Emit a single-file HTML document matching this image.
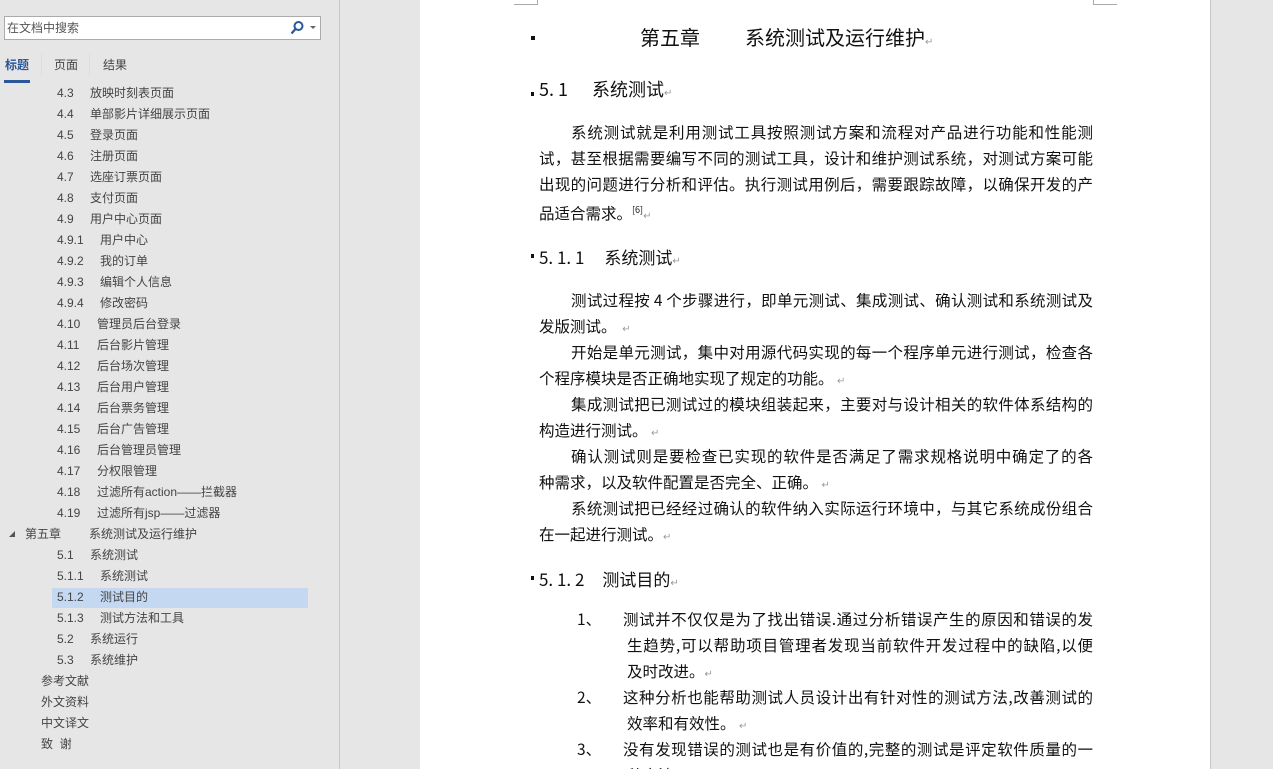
<!DOCTYPE html>
<html style="width:1273px;height:769px;overflow:hidden"><head><meta charset="utf-8"><style>
*{margin:0;padding:0;box-sizing:border-box}
body{width:1273px;height:769px;overflow:hidden;background:#e6e6e6;position:relative;font-family:"Liberation Sans","Microsoft YaHei","Noto Sans CJK SC",sans-serif;}
.a{position:absolute;white-space:nowrap}
.nav{font-size:12px;color:#444;line-height:21px;height:21px}
.nav .n{position:absolute;left:0}
.b{font-size:15.5px;line-height:26px;height:26px;font-family:"Noto Sans CJK SC",sans-serif;color:#111;overflow:hidden}
.j{text-align:justify;text-align-last:justify;white-space:normal}
.r{color:#999;font-size:10px}
.h{font-family:"Noto Sans CJK SC",sans-serif;color:#111}
</style></head><body>
<div class="a" style="left:339px;top:0;width:1px;height:769px;background:#c8c8c8"></div>
<div class="a" style="left:4px;top:16px;width:317px;height:24px;background:#fff;border:1px solid #ababab"></div>
<div class="a" style="left:7px;top:19px;font-size:12px;color:#555;line-height:18px">在文档中搜索</div>
<svg class="a" style="left:289px;top:20px" width="16" height="16" viewBox="0 0 16 16"><circle cx="9.5" cy="6" r="4" fill="none" stroke="#2b579a" stroke-width="2"/><path d="M6.5 9 L2.5 13.5" stroke="#2b579a" stroke-width="2.2"/></svg>
<div class="a" style="left:310px;top:26px;width:0;height:0;border-left:3px solid transparent;border-right:3px solid transparent;border-top:3px solid #666"></div>
<div class="a" style="left:5px;top:57px;font-size:12px;color:#2b579a;font-weight:bold;line-height:16px">标题</div>
<div class="a" style="left:4px;top:80px;width:26px;height:3px;background:#2b579a"></div>
<div class="a" style="left:41px;top:54px;width:1px;height:22px;background:#ddd"></div>
<div class="a" style="left:54px;top:57px;font-size:12px;color:#444;line-height:16px">页面</div>
<div class="a" style="left:89px;top:54px;width:1px;height:22px;background:#ddd"></div>
<div class="a" style="left:103px;top:57px;font-size:12px;color:#444;line-height:16px">结果</div>
<div class="a" style="left:52px;top:588px;width:256px;height:20px;background:#c5d8f2"></div>

<div class="a nav" style="left:57px;top:83px"><span class="n">4.3</span><span style="margin-left:33px">放映时刻表页面</span></div>
<div class="a nav" style="left:57px;top:104px"><span class="n">4.4</span><span style="margin-left:33px">单部影片详细展示页面</span></div>
<div class="a nav" style="left:57px;top:125px"><span class="n">4.5</span><span style="margin-left:33px">登录页面</span></div>
<div class="a nav" style="left:57px;top:146px"><span class="n">4.6</span><span style="margin-left:33px">注册页面</span></div>
<div class="a nav" style="left:57px;top:167px"><span class="n">4.7</span><span style="margin-left:33px">选座订票页面</span></div>
<div class="a nav" style="left:57px;top:188px"><span class="n">4.8</span><span style="margin-left:33px">支付页面</span></div>
<div class="a nav" style="left:57px;top:209px"><span class="n">4.9</span><span style="margin-left:33px">用户中心页面</span></div>
<div class="a nav" style="left:57px;top:230px"><span class="n">4.9.1</span><span style="margin-left:43px">用户中心</span></div>
<div class="a nav" style="left:57px;top:251px"><span class="n">4.9.2</span><span style="margin-left:43px">我的订单</span></div>
<div class="a nav" style="left:57px;top:272px"><span class="n">4.9.3</span><span style="margin-left:43px">编辑个人信息</span></div>
<div class="a nav" style="left:57px;top:293px"><span class="n">4.9.4</span><span style="margin-left:43px">修改密码</span></div>
<div class="a nav" style="left:57px;top:314px"><span class="n">4.10</span><span style="margin-left:40px">管理员后台登录</span></div>
<div class="a nav" style="left:57px;top:335px"><span class="n">4.11</span><span style="margin-left:40px">后台影片管理</span></div>
<div class="a nav" style="left:57px;top:356px"><span class="n">4.12</span><span style="margin-left:40px">后台场次管理</span></div>
<div class="a nav" style="left:57px;top:377px"><span class="n">4.13</span><span style="margin-left:40px">后台用户管理</span></div>
<div class="a nav" style="left:57px;top:398px"><span class="n">4.14</span><span style="margin-left:40px">后台票务管理</span></div>
<div class="a nav" style="left:57px;top:419px"><span class="n">4.15</span><span style="margin-left:40px">后台广告管理</span></div>
<div class="a nav" style="left:57px;top:440px"><span class="n">4.16</span><span style="margin-left:40px">后台管理员管理</span></div>
<div class="a nav" style="left:57px;top:461px"><span class="n">4.17</span><span style="margin-left:40px">分权限管理</span></div>
<div class="a nav" style="left:57px;top:482px"><span class="n">4.18</span><span style="margin-left:40px">过滤所有action——拦截器</span></div>
<div class="a nav" style="left:57px;top:503px"><span class="n">4.19</span><span style="margin-left:40px">过滤所有jsp——过滤器</span></div>
<div class="a" style="left:9px;top:531px;width:0;height:0;border-left:6px solid transparent;border-bottom:6px solid #555"></div>
<div class="a nav" style="left:25px;top:524px"><span class="n">第五章</span><span style="margin-left:64px">系统测试及运行维护</span></div>
<div class="a nav" style="left:57px;top:545px"><span class="n">5.1</span><span style="margin-left:33px">系统测试</span></div>
<div class="a nav" style="left:57px;top:566px"><span class="n">5.1.1</span><span style="margin-left:43px">系统测试</span></div>
<div class="a nav" style="left:57px;top:587px"><span class="n">5.1.2</span><span style="margin-left:43px">测试目的</span></div>
<div class="a nav" style="left:57px;top:608px"><span class="n">5.1.3</span><span style="margin-left:43px">测试方法和工具</span></div>
<div class="a nav" style="left:57px;top:629px"><span class="n">5.2</span><span style="margin-left:33px">系统运行</span></div>
<div class="a nav" style="left:57px;top:650px"><span class="n">5.3</span><span style="margin-left:33px">系统维护</span></div>
<div class="a nav" style="left:41px;top:671px">参考文献</div>
<div class="a nav" style="left:41px;top:692px">外文资料</div>
<div class="a nav" style="left:41px;top:713px">中文译文</div>
<div class="a nav" style="left:41px;top:734px">致&nbsp;&nbsp;谢</div>

<div class="a" style="left:420px;top:0;width:791px;height:769px;background:#fff;border-right:1px solid #c8c8c8;overflow:hidden">
<div class="a" style="left:94px;top:0;width:24px;height:5px;border-right:1px solid #aaa;border-bottom:1px solid #aaa"></div>
<div class="a" style="left:673px;top:0;width:24px;height:5px;border-left:1px solid #aaa;border-bottom:1px solid #aaa"></div>
</div>

<div class="a" style="left:531px;top:36px;width:4px;height:4px;background:#111"></div>
<div class="a h" style="left:640px;top:24px;font-size:20px;line-height:26px">第五章<span style="margin-left:45px">系统测试及运行维护</span><span class="r">↵</span></div>
<div class="a" style="left:531px;top:92px;width:3px;height:4px;background:#111"></div>
<div class="a h" style="left:539px;top:77px;font-size:18px;line-height:24px">5. 1<span style="margin-left:24px">系统测试</span><span class="r">↵</span></div>

<div class="a b j" style="left:571px;top:119px;width:522px">系统测试就是利用测试工具按照测试方案和流程对产品进行功能和性能测</div>
<div class="a b j" style="left:539px;top:145px;width:554px">试，甚至根据需要编写不同的测试工具，设计和维护测试系统，对测试方案可能</div>
<div class="a b j" style="left:539px;top:171px;width:554px">出现的问题进行分析和评估。执行测试用例后，需要跟踪故障，以确保开发的产</div>
<div class="a b" style="left:539px;top:197px">品适合需求。<sup style="font-size:9px">[6]</sup><span class="r">↵</span></div>

<div class="a" style="left:531px;top:254px;width:3px;height:4px;background:#111"></div>
<div class="a h" style="left:539px;top:245px;font-size:17px;line-height:24px">5. 1. 1<span style="margin-left:20px">系统测试</span><span class="r">↵</span></div>

<div class="a b j" style="left:571px;top:287px;width:522px">测试过程按 4 个步骤进行，即单元测试、集成测试、确认测试和系统测试及</div>
<div class="a b" style="left:539px;top:313px">发版测试。 <span class="r">&nbsp;↵</span></div>
<div class="a b j" style="left:571px;top:339px;width:522px">开始是单元测试，集中对用源代码实现的每一个程序单元进行测试，检查各</div>
<div class="a b" style="left:539px;top:365px">个程序模块是否正确地实现了规定的功能。 <span class="r">↵</span></div>
<div class="a b j" style="left:571px;top:391px;width:522px">集成测试把已测试过的模块组装起来，主要对与设计相关的软件体系结构的</div>
<div class="a b" style="left:539px;top:417px">构造进行测试。 <span class="r">↵</span></div>
<div class="a b j" style="left:571px;top:443px;width:522px">确认测试则是要检查已实现的软件是否满足了需求规格说明中确定了的各</div>
<div class="a b" style="left:539px;top:469px">种需求，以及软件配置是否完全、正确。 <span class="r">↵</span></div>
<div class="a b j" style="left:571px;top:495px;width:522px">系统测试把已经经过确认的软件纳入实际运行环境中，与其它系统成份组合</div>
<div class="a b" style="left:539px;top:521px">在一起进行测试。<span class="r">↵</span></div>

<div class="a" style="left:531px;top:576px;width:3px;height:4px;background:#111"></div>
<div class="a h" style="left:539px;top:567px;font-size:17px;line-height:24px">5. 1. 2<span style="margin-left:18px">测试目的</span><span class="r">↵</span></div>

<div class="a b" style="left:577px;top:606px">1、</div>
<div class="a b j" style="left:623px;top:606px;width:470px">测试并不仅仅是为了找出错误.通过分析错误产生的原因和错误的发</div>
<div class="a b j" style="left:627px;top:632px;width:466px">生趋势,可以帮助项目管理者发现当前软件开发过程中的缺陷,以便</div>
<div class="a b" style="left:627px;top:658px">及时改进。<span class="r">↵</span></div>
<div class="a b" style="left:577px;top:684px">2、</div>
<div class="a b j" style="left:623px;top:684px;width:470px">这种分析也能帮助测试人员设计出有针对性的测试方法,改善测试的</div>
<div class="a b" style="left:627px;top:710px">效率和有效性。 <span class="r">↵</span></div>
<div class="a b" style="left:577px;top:736px">3、</div>
<div class="a b j" style="left:623px;top:736px;width:470px">没有发现错误的测试也是有价值的,完整的测试是评定软件质量的一</div>
<div class="a b" style="left:627px;top:762px;height:7px">种方法。</div>
</body></html>
